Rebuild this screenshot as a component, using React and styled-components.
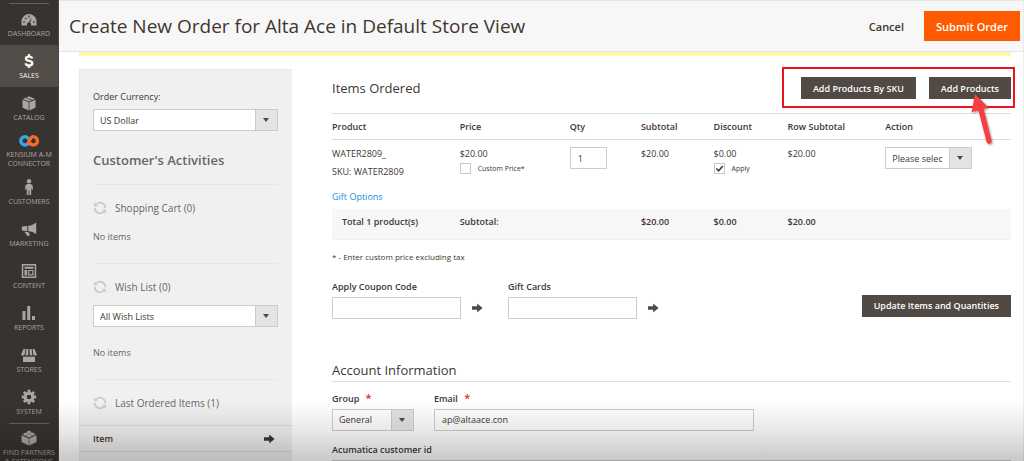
import styled, { createGlobalStyle, css } from "styled-components";
import { useState } from "react";

const GlobalStyle = createGlobalStyle`
  *, *::before, *::after {
    box-sizing: border-box;
  }
  body {
    margin: 0;
    color: #41362f;
    background: #fff;
    font-family: "Open Sans", "Noto Sans", sans-serif;
    font-size: 9px;
    line-height: 13px;
  }
  button, input, select {
    margin: 0;
    font: inherit;
    color: inherit;
  }
`;

const Shell = styled.div`
  position: relative;
  display: flex;
  height: 100vh;
  overflow: hidden;
  &::after {
    content: "";
    position: absolute;
    inset: auto 0 0 0;
    height: 60px;
    background: linear-gradient(rgba(0, 0, 0, 0), rgba(0, 0, 0, 0.09) 50%, rgba(0, 0, 0, 0.22));
    pointer-events: none;
  }
`;

const Sidebar = styled.nav`
  flex: 0 0 59px;
  padding-top: 3px;
  background: #373330;
  border-right: 1px solid #4a4542;
`;

const Rule = styled.hr`
  height: 1px;
  margin: 0 9px -1px;
  border: 0;
  background: #66605c;
`;

const NavItem = styled.a`
  display: flex;
  flex-direction: column;
  align-items: center;
  justify-content: center;
  gap: 2px;
  height: ${(p) => (p.$tall ? 50 : 42)}px;
  color: ${(p) => (p.$active ? "#f7f3eb" : "#aaa6a0")};
  background: ${(p) => (p.$active ? "#524d49" : "transparent")};
  font-size: 7px;
  line-height: 9px;
  text-align: center;
  text-decoration: none;
  text-transform: uppercase;
  white-space: pre-line;
  svg {
    display: block;
    flex: none;
  }
`;

const Page = styled.div`
  flex: 1;
  min-width: 0;
  border-right: 1px solid #ececec;
`;

const Header = styled.header`
  display: flex;
  align-items: center;
  height: 52px;
  padding: 0 3px 0 10px;
  background: #f7f7f7;
  border-top: 1px solid #e6e6e8;
  border-bottom: 1px solid #e5e5e5;
`;

const Title = styled.h1`
  flex: 1;
  margin: 0;
  font-size: 19px;
  font-weight: 400;
  line-height: 26px;
`;

const CancelButton = styled.button`
  padding: 0 20px;
  border: 0;
  background: none;
  font-size: 11px;
  font-weight: 600;
`;

const SubmitButton = styled.button`
  height: 30px;
  padding: 0 12px;
  color: #fff;
  background: #fe5b00;
  border: 0;
  font-size: 11px;
  font-weight: 600;
`;

const Content = styled.div`
  padding: 0 12px 0 20px;
`;

const Notice = styled.div`
  height: 4px;
  background: #fff8ac;
`;

const Columns = styled.div`
  display: flex;
  gap: 40px;
  margin-top: 13px;
`;

const Aside = styled.aside`
  flex: 0 0 213px;
  padding: 20px 14px 0 13px;
  background: #f0f0f0;
  border: solid #e8e8e8;
  border-width: 1px 0 0 1px;
`;

const AsideLabel = styled.label`
  display: block;
  margin-bottom: 5px;
  line-height: 14px;
`;

const AsideHeading = styled.h2`
  margin: 20px 0 15px;
  color: #666;
  font-size: 13px;
  font-weight: 600;
  line-height: 18px;
`;

const Activity = styled.section`
  padding: 16px 0 ${(p) => (p.$last ? 15 : 19)}px;
  border-top: 1px solid #e6e6e6;
`;

const ActivityTitle = styled.h3`
  display: flex;
  align-items: center;
  gap: 8px;
  margin: 0;
  color: #666;
  font-size: 10px;
  font-weight: 400;
  line-height: 14px;
`;

const RefreshButton = styled.button`
  display: flex;
  padding: 0;
  border: 0;
  background: none;
  color: #cbcbcb;
`;

const Empty = styled.p`
  margin: ${(p) => (p.$spaced ? 19 : 15)}px 0 0;
  color: #666;
  line-height: 14px;
`;

const WishSelect = styled.div`
  margin-top: 11px;
`;

const ItemsTable = styled.table`
  width: calc(100% + 27px);
  margin: 0 -14px 0 -13px;
  border-collapse: collapse;
  th, td {
    height: 26px;
    padding: 0 17px 0 13px;
    border-top: 1px solid #dcdcdc;
    font-weight: 600;
    text-align: left;
  }
  th:last-child, td:last-child {
    width: 41px;
  }
  td {
    height: 30px;
  }
  svg, input {
    display: block;
  }
`;

const SelectBox = styled.div`
  position: relative;
  width: ${(p) => p.$width ?? "100%"};
  &::before {
    content: "";
    position: absolute;
    inset: 0 0 0 auto;
    width: 23px;
    background: #e3e3e3;
    border: 1px solid #ccc;
    pointer-events: none;
  }
  &::after {
    content: "";
    position: absolute;
    top: 9px;
    right: 9px;
    border: solid transparent;
    border-width: 4px 3px 0;
    border-top-color: #514943;
    pointer-events: none;
  }
`;

const fieldStyle = css`
  display: block;
  width: 100%;
  height: 22px;
  padding: 0 7px;
  background: #fff;
  border: 1px solid #ccc;
  border-radius: 0;
  outline: none;
`;

const NativeSelect = styled.select`
  ${fieldStyle}
  padding-right: 29px;
  padding-left: 6px;
  appearance: none;
`;

const TextInput = styled.input`
  ${fieldStyle}
  width: ${(p) => p.$width ?? "100%"};
`;

const Check = styled.input`
  appearance: none;
  flex: none;
  width: 11px;
  height: 11px;
  background: #fff center / 9px no-repeat;
  border: 1px solid #c8c8c8;
  &:checked {
    background-image: url("data:image/svg+xml,%3Csvg xmlns='http://www.w3.org/2000/svg' viewBox='0 0 9 9'%3E%3Cpath d='M1.3 4.4 3.6 6.8 7.8 2' fill='none' stroke='%2341362f' stroke-width='1.5'/%3E%3C/svg%3E");
  }
`;

const CheckLabel = styled.label`
  display: flex;
  align-items: center;
  gap: 7px;
  margin-top: 2px;
  font-size: 7px;
`;

const Main = styled.main`
  flex: 1;
  min-width: 0;
  padding-top: 8px;
`;

const SectionHead = styled.div`
  display: flex;
  align-items: center;
  justify-content: space-between;
  margin-bottom: 14px;
`;

const SectionTitle = styled.h2`
  margin: 0;
  font-size: 13px;
  font-weight: 400;
  line-height: 18px;
`;

const Actions = styled.div`
  position: relative;
  display: flex;
  gap: 13px;
`;

const Callout = styled.div`
  position: absolute;
  inset: -10px -4px -9px -19px;
  border: 2px solid #e8161c;
  pointer-events: none;
`;

const Pointer = styled.svg`
  position: absolute;
  top: 15px;
  right: 16px;
  pointer-events: none;
`;

const DarkButton = styled.button`
  height: 22px;
  padding: 0 12px;
  color: #fff;
  background: #514943;
  border: 0;
  font-weight: 600;
  white-space: nowrap;
`;

const OrderTable = styled.table`
  width: 100%;
  table-layout: fixed;
  border-collapse: collapse;
  th, td {
    padding: 0;
    text-align: left;
    vertical-align: top;
  }
  thead th {
    height: 26px;
    border: solid #dedede;
    border-width: 1px 0;
    font-weight: 600;
    vertical-align: middle;
  }
  tbody td {
    padding-top: 7px;
  }
  tfoot td {
    height: 30px;
    padding-top: 6px;
    background: #f7f7f7;
    border-bottom: 1px solid #f0f0f0;
    font-weight: 600;
  }
  tfoot td:first-child {
    padding-left: 10px;
  }
`;

const Sku = styled.div`
  margin-top: 5px;
`;

const GiftLink = styled.a`
  display: block;
  padding: 5px 0 6px;
  color: #1a8fdc;
  text-decoration: none;
`;

const Footnote = styled.p`
  margin: 11px 0 17px;
  font-size: 8px;
  line-height: 12px;
`;

const FieldRow = styled.div`
  display: flex;
  gap: ${(p) => p.$gap}px;
  margin-bottom: ${(p) => p.$after}px;
`;

const FieldLabel = styled.label`
  display: block;
  margin-bottom: 4px;
  font-weight: 600;
`;

const Required = styled.span`
  margin-left: 4px;
  color: #e22626;
  font-size: 11px;
  line-height: 12px;
`;

const CodeLine = styled.div`
  display: flex;
  align-items: center;
  gap: 11px;
`;

const ArrowButton = styled.button`
  display: flex;
  padding: 0;
  border: 0;
  background: none;
  color: #514943;
`;

const UpdateWrap = styled.div`
  margin-left: auto;
  padding-top: 15px;
`;

const AccountTitle = styled(SectionTitle)`
  margin-bottom: 10px;
  padding-bottom: 2px;
  border-bottom: 1px solid #dedede;
`;

const DashboardIcon = () => (
  <svg width="16" height="16" viewBox="0 0 16 16" fill="currentColor">
    <path fillRule="evenodd" d="M.5 14.500V10.500a7.500 7.500 0 0 1 15 0v4H9.800a2 2 0 0 0-.7-2.800L11 6.500l-3.400 4.900a2 2 0 0 0-1.400 3.100zM2.200 11.700h1.800v-1.200H2.200zM3.600 7.400l1.300 1.200.9-.9-1.300-1.200zM7.400 4.600v1.800h1.200V4.600zM12 10.500v1.200h1.800v-1.200z" />
  </svg>
);

const DollarIcon = () => (
  <svg width="16" height="16" viewBox="0 0 16 16" fill="none" stroke="currentColor">
    <path d="M11.200 5.500C10.800 4.200 9.700 3.600 8 3.600c-1.900 0-3 .8-3 2.100 0 3.100 6.300 1.400 6.300 4.600 0 1.400-1.200 2.200-3.200 2.200-2 0-3.200-.8-3.500-2.300" strokeWidth="2.400" />
    <path d="M8 1v3M8 12v3" strokeWidth="2.200" />
  </svg>
);

const CubeIcon = () => (
  <svg width="16" height="16" viewBox="0 0 16 16" fill="currentColor">
    <path d="M1.500 4.700 7.600 7.300V15.400L1.500 12.600zM14.500 4.700 8.400 7.300v8.100l6.100-2.800zM2 3.900 4.400 2.800l6.100 2.600L8 6.500zM5.300 2.400 8 1.200l6 2.700-2.600 1.100z" />
  </svg>
);

const KensiumIcon = () => (
  <svg width="20" height="16" viewBox="0 0 20 16" fill="none" strokeWidth="3.400">
    <path d="M11 10.300C9.200 12.200 8 13 6 13A4.200 4.200 0 0 1 6 4.600C8 4.600 8.800 5.600 9.800 7" stroke="#2fa9ea" />
    <path d="M8.500 11.700C10.500 9.500 11.300 4.600 14.200 4.600a4.200 4.200 0 0 1 0 8.400c-1.500 0-2.400-.6-3.400-2" stroke="#f96a24" />
  </svg>
);

const PersonIcon = () => (
  <svg width="16" height="16" viewBox="0 0 16 16" fill="currentColor">
    <circle cx="8" cy="2.300" r="2.200" />
    <path d="M6.200 5h3.600l1.900 1.500.2 4.300h-1.200L10.200 8v8H8.400v-4.500h-.8V16H5.800V8l-.5 2.800H4.100l.2-4.300z" />
  </svg>
);

const MegaphoneIcon = () => (
  <svg width="16" height="16" viewBox="0 0 16 16" fill="currentColor">
    <path d="M15.200 1.500v11.700C12.800 11.300 10.500 10.400 7.300 10.200V4.800C10.500 4.400 12.800 3.400 15.200 1.500zM.8 6.200l1-1L6.300 4.900v5.200L1.800 9.700l-1-1zM3.400 10.700l3.900.3 1.900 3.300-2.700 1z" />
  </svg>
);

const ContentIcon = () => (
  <svg width="16" height="16" viewBox="0 0 16 16" fill="currentColor">
    <path fillRule="evenodd" d="M.8 1h14.400v14H.8zM2.300 2.500v11h11.400v-11z" />
    <path d="M3.500 3.700h9v2h-9zM3.500 6.900h2.700v5.500H3.500z" />
    <path fillRule="evenodd" d="M7.200 6.900h5.300v5.500H7.200zM8.400 8.100v3.100h2.900V8.100z" />
  </svg>
);

const ReportsIcon = () => (
  <svg width="16" height="16" viewBox="0 0 16 16" fill="currentColor">
    <path d="M1.500 6h3v9h-3zM6.200 1h3v14h-3zM11 11h3v4h-3z" />
  </svg>
);

const StoresIcon = () => (
  <svg width="16" height="16" viewBox="0 0 16 16" fill="currentColor">
    <path d="M2 9.800c1 .2 1.800 0 2.300-.6 1 1 2.600 1 3.700 0 1.100 1 2.700 1 3.700 0 .5.600 1.300.8 2.300.6V15H2z" />
    <path d="M2.500 2h2L3.600 7.500C3.300 9.200.1 9 .2 7.200zM5.400 2h2l-.1 5.500c-.2 1.500-2.700 1.500-2.700 0zM8.600 2h2l.8 5.500c0 1.500-2.500 1.500-2.700 0zM11.500 2h2l2.300 5.200c.1 1.800-3.100 2-3.400.3z" />
  </svg>
);

const GearIcon = () => (
  <svg width="16" height="16" viewBox="0 0 16 16">
    <g stroke="currentColor" strokeWidth="2.800">
      <path d="M8 .8v14.400M.8 8h14.400M2.900 2.900l10.200 10.200M13.100 2.900 2.900 13.100" />
    </g>
    <circle cx="8" cy="8" r="5.200" fill="currentColor" />
    <circle cx="8" cy="8" r="2.300" fill="#373330" />
  </svg>
);

const BrickIcon = () => (
  <svg width="16" height="16" viewBox="0 0 16 16" fill="currentColor">
    <path d="M.5 5.200 7.700 8.500v7L.5 12zM15.500 5.200 8.300 8.500v7l7.200-3.500z" />
    <path d="M1 4.400 8 1.200l7 3.200L8 7.700z" opacity=".7" />
    <ellipse cx="8" cy="2" rx="2" ry="1.200" />
    <ellipse cx="4.700" cy="3.900" rx="2" ry="1.200" />
    <ellipse cx="11.300" cy="3.900" rx="2" ry="1.200" />
    <ellipse cx="8" cy="5.700" rx="2" ry="1.200" />
  </svg>
);

const RefreshIcon = () => (
  <svg width="14" height="14" viewBox="0 0 14 14" fill="none" stroke="currentColor" strokeWidth="1.800">
    <path d="M3.200 3.300A5.300 5.300 0 0 1 12.300 7.300M10.800 10.700A5.300 5.300 0 0 1 1.700 6.700" />
    <path d="M1 1.200v4h4.200zM13 12.800v-4H8.800z" fill="currentColor" stroke="none" />
  </svg>
);

const ArrowIcon = () => (
  <svg width="11" height="10" viewBox="0 0 11 10" fill="currentColor">
    <path d="M0 3.300h5.200V.4L10.600 5 5.200 9.600V6.700H0z" />
  </svg>
);

const navItems = [
  { label: "Dashboard", Icon: DashboardIcon },
  { label: "Sales", Icon: DollarIcon, active: true },
  { label: "Catalog", Icon: CubeIcon },
  { label: "Kensium A-M\nConnector", Icon: KensiumIcon },
  { label: "Customers", Icon: PersonIcon },
  { label: "Marketing", Icon: MegaphoneIcon },
  { label: "Content", Icon: ContentIcon },
  { label: "Reports", Icon: ReportsIcon },
  { label: "Stores", Icon: StoresIcon },
  { label: "System", Icon: GearIcon },
];

const Select = ({ options, width, ...props }) => (
  <SelectBox $width={width}>
    <NativeSelect {...props}>
      {options.map((o) => (
        <option key={o}>{o}</option>
      ))}
    </NativeSelect>
  </SelectBox>
);

const ActivityHead = ({ children }) => (
  <ActivityTitle>
    <RefreshButton type="button" aria-label="Refresh">
      <RefreshIcon />
    </RefreshButton>
    {children}
  </ActivityTitle>
);

const CodeField = ({ id, label }) => (
  <div>
    <FieldLabel htmlFor={id}>{label}</FieldLabel>
    <CodeLine>
      <TextInput id={id} type="text" $width="129px" />
      <ArrowButton type="button" aria-label="Apply">
        <ArrowIcon />
      </ArrowButton>
    </CodeLine>
  </div>
);

const App = () => {
  const [qty, setQty] = useState("1");
  const [email, setEmail] = useState("ap@altaace.con");
  return (
    <>
      <GlobalStyle />
      <Shell>
        <Sidebar>
          <Rule />
          {navItems.map(({ label, Icon, active }) => (
            <NavItem key={label} href="#" $active={active}>
              <Icon />
              {label}
            </NavItem>
          ))}
          <Rule />
          <NavItem href="#" $tall>
            <BrickIcon />
            {"Find Partners\n& Extensions"}
          </NavItem>
        </Sidebar>
        <Page>
          <Header>
            <Title>Create New Order for Alta Ace in Default Store View</Title>
            <CancelButton type="button">Cancel</CancelButton>
            <SubmitButton type="button">Submit Order</SubmitButton>
          </Header>
          <Content>
            <Notice />
            <Columns>
              <Aside>
                <AsideLabel htmlFor="currency">Order Currency:</AsideLabel>
                <Select id="currency" options={["US Dollar"]} />
                <AsideHeading>Customer's Activities</AsideHeading>
                <Activity>
                  <ActivityHead>Shopping Cart (0)</ActivityHead>
                  <Empty>No items</Empty>
                </Activity>
                <Activity>
                  <ActivityHead>Wish List (0)</ActivityHead>
                  <WishSelect>
                    <Select aria-label="Wish list" options={["All Wish Lists"]} />
                  </WishSelect>
                  <Empty $spaced>No items</Empty>
                </Activity>
                <Activity $last>
                  <ActivityHead>Last Ordered Items (1)</ActivityHead>
                </Activity>
                <ItemsTable>
                  <tbody>
                    <tr>
                      <th>Item</th>
                      <th>
                        <ArrowIcon />
                      </th>
                    </tr>
                    <tr>
                      <td />
                      <td>
                        <Check type="checkbox" aria-label="Add item to order" />
                      </td>
                    </tr>
                  </tbody>
                </ItemsTable>
              </Aside>
              <Main>
                <SectionHead>
                  <SectionTitle>Items Ordered</SectionTitle>
                  <Actions>
                    <DarkButton type="button">Add Products By SKU</DarkButton>
                    <DarkButton type="button">Add Products</DarkButton>
                    <Callout />
                    <Pointer width="24" height="56" viewBox="0 0 24 56">
                      <path d="M4 2 17.500 15.500 12.600 17 20.500 48.500a2.500 2.500 0 0 1-5 1.300L7.500 18.400.5 20z" fill="#f93e42" style={{ filter: "drop-shadow(1px 1px 1px rgba(0,0,0,.4))" }} />
                    </Pointer>
                  </Actions>
                </SectionHead>
                <OrderTable>
                  <colgroup>
                    <col width="18.8%" />
                    <col width="16.2%" />
                    <col width="10.5%" />
                    <col width="10.7%" />
                    <col width="10.9%" />
                    <col width="14.4%" />
                    <col />
                  </colgroup>
                  <thead>
                    <tr>
                      <th>Product</th>
                      <th>Price</th>
                      <th>Qty</th>
                      <th>Subtotal</th>
                      <th>Discount</th>
                      <th>Row Subtotal</th>
                      <th>Action</th>
                    </tr>
                  </thead>
                  <tbody>
                    <tr>
                      <td>
                        WATER2809_
                        <Sku>SKU: WATER2809</Sku>
                      </td>
                      <td>
                        $20.00
                        <CheckLabel>
                          <Check type="checkbox" />
                          Custom Price*
                        </CheckLabel>
                      </td>
                      <td>
                        <TextInput
                          type="text"
                          aria-label="Qty"
                          $width="37px"
                          value={qty}
                          onChange={(e) => setQty(e.target.value)}
                        />
                      </td>
                      <td>$20.00</td>
                      <td>
                        $0.00
                        <CheckLabel>
                          <Check type="checkbox" defaultChecked />
                          Apply
                        </CheckLabel>
                      </td>
                      <td>$20.00</td>
                      <td>
                        <Select aria-label="Action" width="87px" options={["Please select"]} />
                      </td>
                    </tr>
                    <tr>
                      <td colSpan={7}>
                        <GiftLink href="#">Gift Options</GiftLink>
                      </td>
                    </tr>
                  </tbody>
                  <tfoot>
                    <tr>
                      <td>Total 1 product(s)</td>
                      <td>Subtotal:</td>
                      <td />
                      <td>$20.00</td>
                      <td>$0.00</td>
                      <td>$20.00</td>
                      <td />
                    </tr>
                  </tfoot>
                </OrderTable>
                <Footnote>* - Enter custom price excluding tax</Footnote>
                <FieldRow $gap={25} $after={42}>
                  <CodeField id="coupon" label="Apply Coupon Code" />
                  <CodeField id="giftcard" label="Gift Cards" />
                  <UpdateWrap>
                    <DarkButton type="button">Update Items and Quantities</DarkButton>
                  </UpdateWrap>
                </FieldRow>
                <AccountTitle>Account Information</AccountTitle>
                <FieldRow $gap={20} $after={12}>
                  <div>
                    <FieldLabel htmlFor="group">
                      Group <Required>*</Required>
                    </FieldLabel>
                    <Select id="group" width="82px" options={["General"]} />
                  </div>
                  <div>
                    <FieldLabel htmlFor="email">
                      Email <Required>*</Required>
                    </FieldLabel>
                    <TextInput
                      id="email"
                      type="email"
                      $width="320px"
                      value={email}
                      onChange={(e) => setEmail(e.target.value)}
                    />
                  </div>
                </FieldRow>
                <FieldLabel htmlFor="acumatica">Acumatica customer id</FieldLabel>
                <TextInput id="acumatica" type="text" />
              </Main>
            </Columns>
          </Content>
        </Page>
      </Shell>
    </>
  );
};

export default App;
